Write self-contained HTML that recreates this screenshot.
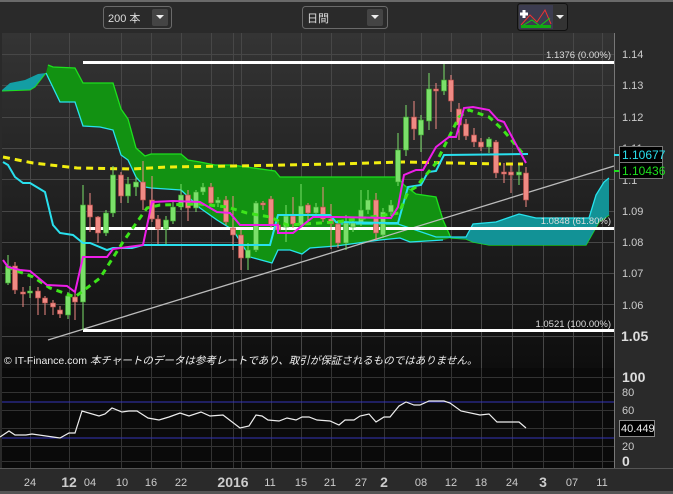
<!DOCTYPE html><html><head><meta charset="utf-8"><style>
*{margin:0;padding:0}body{width:673px;height:494px;background:#2a2a2a;overflow:hidden;font-family:"Liberation Sans","Noto Sans CJK JP",sans-serif}
svg{position:absolute;left:0;top:0}
</style></head><body>
<svg width="673" height="494" viewBox="0 0 673 494" id="s">
<defs><linearGradient id="bg" x1="0" y1="0" x2="0" y2="1"><stop offset="0" stop-color="#343434"/><stop offset="1" stop-color="#0e0e0e"/></linearGradient></defs>
<rect x="0" y="0" width="673" height="494" fill="#2a2a2a"/>
<rect x="0" y="0" width="673" height="2" fill="#6a6a6a"/>
<!-- toolbar -->
<rect x="103.5" y="6.5" width="68" height="22" rx="3" fill="#2a2a2a" stroke="#6a6a6a"/>
<text x="108" y="22" fill="#ddd" font-size="11">200 本</text>
<rect x="152" y="9" width="16" height="17" rx="2" fill="#444"/><path d="M156 15h8l-4 4z" fill="#eee"/>
<rect x="302.5" y="6.5" width="85" height="22" rx="3" fill="#2a2a2a" stroke="#6a6a6a"/>
<text x="307" y="22" fill="#ddd" font-size="11">日間</text>
<rect x="367" y="9" width="16" height="17" rx="2" fill="#444"/><path d="M371 15h8l-4 4z" fill="#eee"/>
<rect x="517.5" y="3.5" width="50" height="27" rx="3" fill="#333" stroke="#111"/>
<rect x="519" y="5" width="34" height="24" fill="#3c3c50"/>
<path d="M520 14h8M524 10v8" stroke="#fff" stroke-width="3"/>
<path d="M521 25 L530 15 L537 22 L545 10 L551 24" stroke="#e33" fill="none"/>
<path d="M522 26 L532 20 L540 26 L550 18" stroke="#1c1" fill="none"/>
<rect x="521" y="25" width="30" height="3" fill="#1a1"/>
<path d="M556 15h8l-4 4z" fill="#eee"/>
<!-- main chart -->
<rect x="2" y="33" width="612" height="335" fill="url(#bg)"/>
<g stroke="#474747" stroke-width="1" id="grid"></g>
<!-- cloud green -->
<path d="M48,65 53,67 75,68 83,83 113,83 121,109 128,119 136,148 145,156 151,154 181,154 188,160 200,162 215,165 232,165 275,171 280,177 398,177 404,185 416,194 436,197 443,220 451,238 L443,240 410,242 400,238 380,240 336,246 310,248 302,254 290,250 278,250 272,263 250,257 233,230 217,220 200,208 181,190 151,188 145,187 136,177 128,160 121,155 113,130 100,127 83,126 75,102 60,102 46,73Z" fill="#129212"/>
<path d="M48,65 53,67 75,68 83,83 113,83 121,109 128,119 136,148 145,156 151,154 181,154 188,160 200,162 215,165 232,165 275,171 280,177 398,177 404,185 416,194 436,197 443,220 451,238 466,239 473,242 489,245 586,245 599,222 609,215" fill="none" stroke="#1de01d" stroke-width="1.3"/>
<!-- teal left cloud -->
<path d="M2,90 10,83 25,80 38,74 46,73 35,87 30,90 2,91Z" fill="#139ea4"/>
<path d="M2,91 30,90 35,87 46,73" fill="none" stroke="#1de01d"/>
<!-- teal right cloud -->
<path d="M443,237 466,237 473,224 496,222 519,214 536,218 589,218 596,195 604,182 609,178 609,215 599,222 586,245 489,245 473,242 466,239 451,238Z" fill="#129296"/>
<path d="M46,73 60,102 75,102 83,126 100,127 113,130 121,155 128,160 136,177 145,187 151,188 181,190 200,208 217,220 233,230 250,257 272,263 278,250 290,250 302,254 310,248 336,246 380,240 400,238 410,242 443,240 M336,224 398,224 436,237 466,237 473,224 496,222 519,214 536,218 589,218 596,195 604,182 609,178" fill="none" stroke="#27e3ee" stroke-width="1.3"/>
<!-- yellow 200MA -->
<path d="M3,157 33,163 77,168 133,169 167,167 233,166 336,164 403,162 503,164 523,164" fill="none" stroke="#f2ee10" stroke-width="3" stroke-dasharray="7,5"/>
<!-- trend line -->
<path d="M48,340 L614,166" stroke="#bbb" stroke-width="1.3"/>
<!-- fib lines -->
<rect x="83" y="61" width="531" height="3" fill="#fff"/>
<rect x="83" y="227" width="531" height="3" fill="#fff"/>
<rect x="83" y="329" width="531" height="3" fill="#fff"/>
<g id="candles"></g>
<!-- kijun -->
<path d="M3,162 8,165 15,177 23,183 30,183 45,192 53,225 60,233 73,235 83,243 90,243 107,250 113,248 132,248 143,245 270,245 278,215 330,215 336,222 391,223 398,223 408,187 421,185 428,172 436,171 444,155 528,154" fill="none" stroke="#29e0ee" stroke-width="2"/>
<!-- chikou -->
<path d="M7,267 33,277 50,288 75,297 100,278 123,242 137,222 147,208 160,205 200,204 227,207 247,213 270,217 287,225 336,222 399,213 408,192 416,187 436,163 449,137 459,117 469,110 489,117 503,130 524,155" fill="none" stroke="#3de41a" stroke-width="3" stroke-dasharray="6,5"/>
<!-- tenkan -->
<path d="M3,260 8,267 20,270 30,271 47,285 67,286 75,292 83,257 107,257 113,249 143,245 152,202 173,201 200,202 217,212 230,213 240,225 278,225 278,233 293,233 313,217 336,217 391,218 398,207 404,175 416,170 423,170 436,147 449,137 456,137 464,108 473,107 489,110 498,120 504,122 526,163" fill="none" stroke="#ee1ee8" stroke-width="2"/>
<g font-size="9.5" fill="#ddd" text-anchor="end">
<text x="611" y="58">1.1376 (0.00%)</text>
<text x="611" y="224">1.0848 (61.80%)</text>
<text x="611" y="327">1.0521 (100.00%)</text>
</g>
<text x="4" y="364" font-size="10.5" fill="#eee">© IT-Finance.com  <tspan font-style="italic">本チャートのデータは参考レートであり、取引が保証されるものではありません。</tspan></text>
<rect x="614" y="33" width="1" height="335" fill="#777"/>
<g font-size="11" fill="#ccc">
<text x="622" y="58">1.14</text><text x="622" y="89">1.13</text><text x="622" y="121">1.12</text><text x="622" y="152">1.11</text><text x="622" y="184">1.1</text><text x="622" y="215">1.09</text><text x="622" y="246">1.08</text><text x="622" y="277">1.07</text><text x="622" y="309">1.06</text>
<text x="621" y="341" font-size="14" font-weight="bold" fill="#ddd">1.05</text></g>
<rect x="614" y="154" width="6" height="2" fill="#29e0ee"/>
<rect x="614" y="170" width="6" height="2" fill="#1de01d"/>
<rect x="619.5" y="146.5" width="43" height="16" fill="#000" stroke="#777"/>
<text x="622" y="159" font-size="12" fill="#29e0ee">1.10677</text>
<rect x="619.5" y="162.5" width="43" height="16" fill="#000" stroke="#777"/>
<text x="622" y="175" font-size="12" fill="#1de01d">1.10436</text>
<!-- RSI panel -->
<rect x="2" y="368" width="612" height="100" fill="#0a0a0a"/>
<g stroke="#333" id="grid2"></g>
<rect x="2" y="401.5" width="612" height="1" fill="#3434b8"/>
<rect x="2" y="437.5" width="612" height="1" fill="#3434b8"/>
<path d="M0,437 9,431 15,435 26,435 32,434 60,438 69,433 75,433 82,411 99,416 105,414 112,408 122,412 129,411 137,411 148,418 159,420 169,417 180,413 189,416 201,412 210,416 223,415 240,428 249,426 256,415 262,416 268,420 279,421 287,418 296,420 302,417 309,417 317,420 330,421 339,425 345,420 354,420 360,416 369,414 376,422 384,417 390,417 399,406 406,402 414,405 420,405 429,401 444,401 450,403 461,411 480,415 489,414 497,422 519,422 526,428" fill="none" stroke="#eee" stroke-width="1.2"/>
<rect x="614" y="368" width="1" height="100" fill="#777"/>
<g font-size="11" fill="#ccc">
<text x="622" y="382" font-size="14" font-weight="bold" fill="#ddd">100</text><text x="622" y="396">80</text><text x="622" y="414">60</text><text x="622" y="450">20</text><text x="622" y="466" font-size="14" font-weight="bold" fill="#ddd">0</text></g>
<rect x="619.5" y="420.5" width="35" height="16" fill="#000" stroke="#888"/>
<text x="621" y="432" font-size="11" fill="#eee">40.449</text>
<rect x="0" y="468" width="673" height="1" fill="#555"/>
<g font-size="11" fill="#ccc" text-anchor="middle" id="xl">
<text x="30" y="486">24</text><text x="69" y="487" font-size="14" font-weight="bold">12</text><text x="90" y="486">04</text><text x="122" y="486">10</text><text x="151" y="486">16</text><text x="181" y="486">22</text><text x="233" y="487" font-size="14" font-weight="bold">2016</text><text x="270" y="486">11</text><text x="301" y="486">15</text><text x="330" y="486">21</text><text x="361" y="486">27</text><text x="384" y="487" font-size="14" font-weight="bold">2</text><text x="421" y="486">08</text><text x="451" y="486">12</text><text x="481" y="486">18</text><text x="512" y="486">24</text><text x="543" y="487" font-size="14" font-weight="bold">3</text><text x="572" y="486">07</text><text x="602" y="486">11</text></g>
<rect x="0" y="491" width="673" height="3" fill="#555"/>
</svg>
<script>
var NS="http://www.w3.org/2000/svg",vx=[30,69,121,151,181,211,233,241,271,301,331,361,384,421,451,481,512,543,573,602];
function el(p,t,a){var e=document.createElementNS(NS,t);for(var k in a)e.setAttribute(k,a[k]);p.appendChild(e);return e}
var g=document.getElementById("grid"),g2=document.getElementById("grid2");
vx.forEach(function(x){el(g,"line",{x1:x+.5,y1:33,x2:x+.5,y2:368});el(g2,"line",{x1:x+.5,y1:368,x2:x+.5,y2:468})});
for(var i=0;i<10;i++){var y=Math.round(54+i*31.3)+.5;el(g,"line",{x1:2,y1:y,x2:614,y2:y})}
[377,392,410,428,446,461].forEach(function(y){el(g2,"line",{x1:2,y1:y+.5,x2:614,y2:y+.5})});
var C=[[8,266,283,1,255,285],[15,266,290,0],[23,292,294,0,287,307],[30,291,293,1,286,298],[38,291,298,0,287,315],[45,298,303,0,296,315],[53,303,307,0,300,315],[60,310,314,0,306,318],[68,296,315,1],[75,297,302,0,293,320],[83,205,302,1,185,330],[90,205,217,0,193,232],[98,217,233,0,216,243],[106,213,233,1,210,236],[113,175,213,1,166,217],[121,175,196,0,172,203],[128,184,196,1,177,203],[136,182,187,1,177,196],[143,182,200,0,161,210],[152,200,219,0,176,222],[158,219,229,0,215,245],[166,220,229,1,216,245],[173,207,221,1,202,224],[181,195,207,1,184,210],[188,195,208,0,190,221],[196,192,208,1,190,212],[203,187,192,1,183,195],[211,187,203,0,183,206],[218,200,203,1,197,207],[226,200,222,0,196,225],[233,228,235,0,196,250],[241,235,258,0,230,270],[248,250,258,1,243,270],[256,203,250,1,201,252],[263,203,205,0,201,210],[271,199,225,0,196,228],[278,225,230,0,222,233],[286,216,227,1,205,242],[293,216,224,0,197,228],[301,206,225,1,184,228],[308,205,213,0,203,222],[316,207,213,1,203,218],[323,207,219,0,187,222],[331,219,224,0,204,249],[338,224,243,0,220,248],[346,223,243,1,215,250],[353,223,227,1,219,232],[361,210,223,1,190,226],[368,200,210,1,190,214],[376,200,233,0,193,240],[383,212,235,1,208,238],[391,205,212,1,200,216],[398,150,182,1,133,186],[406,117,150,1,105,156],[414,117,129,0,101,140],[421,120,135,1,115,152],[429,89,121,1,73,130],[436,89,91,0,83,129],[444,80,91,1,64,95],[451,80,101,0,75,112],[459,109,125,0,103,140],[466,124,136,0,119,140],[474,135,142,0,128,147],[481,142,147,0,138,151],[489,139,147,1,137,153],[496,142,173,0,140,178],[504,172,173,0,163,183],[511,172,175,0,165,193],[519,172,175,1,165,185],[526,173,200,0,167,207]];
var cg=document.getElementById("candles");
C.forEach(function(c){var gr=c[3],col=gr?"#7be06a":"#f08a84",st=gr?"#3aa22c":"#b44a45";var wt=c[4]||c[1]-4,wb=c[5]||c[2]+4;
el(cg,"line",{x1:c[0],y1:wt,x2:c[0],y2:wb,stroke:col,"stroke-width":1});
el(cg,"rect",{x:c[0]-2.5,y:c[1],width:5,height:Math.max(2,c[2]-c[1]),fill:col,stroke:st,"stroke-width":.6})});
</script>
</body></html>
